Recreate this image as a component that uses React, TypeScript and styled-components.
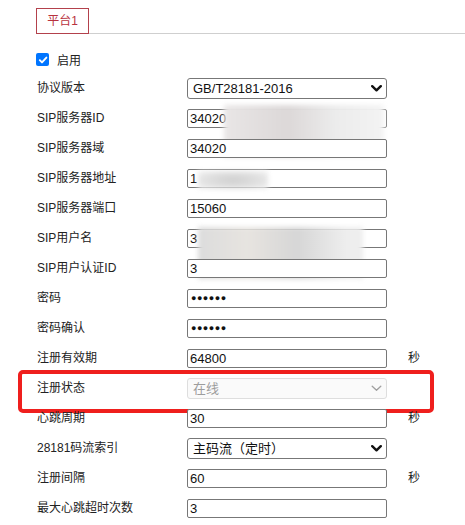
import React from "react";
import styled, { createGlobalStyle } from "styled-components";

const Global = createGlobalStyle`
  html, body { margin: 0; padding: 0; background: #fff; }
  body { font-family: "Liberation Sans", "Noto Sans CJK SC", sans-serif; color: #222; }
  * { box-sizing: border-box; }
`;

const Page = styled.div`
  position: relative;
  width: 465px;
  height: 525px;
  overflow: hidden;
  padding: 8px 0 0 36px;
`;

const TabBar = styled.div`
  display: flex;
  border-bottom: 1px solid #cfcfcf;
  height: 26px;
`;

const Tab = styled.div`
  width: 53px;
  height: 26px;
  border: 1px solid #b3414c;
  display: flex;
  align-items: center;
  justify-content: center;
  color: #b8323e;
  font-size: 12px;
  line-height: 1;
  background: #fff;
`;

const Form = styled.div`
  margin-top: 9px;
  display: flex;
  flex-direction: column;
`;

const CheckRow = styled.label`
  display: flex;
  align-items: center;
  height: 30px;
  padding-top: 3px;
  gap: 8px;
  font-size: 12px;
`;

const CheckBox = styled.span`
  width: 13px;
  height: 13px;
  border-radius: 2px;
  background: #0075ff;
  display: flex;
  align-items: center;
  justify-content: center;
`;

const Row = styled.div<{ $highlight?: boolean }>`
  position: relative;
  display: grid;
  grid-template-columns: 151px 200px 21px auto;
  align-items: center;
  height: 30px;
  font-size: 12px;
  &::after {
    content: "";
    display: ${(p) => (p.$highlight ? "block" : "none")};
    position: absolute;
    left: -18px;
    top: -3px;
    width: 408px;
    height: 35px;
    border: 4px solid #ef1f1d;
    border-radius: 5px;
    pointer-events: none;
  }
`;

const Label = styled.span`
  padding-left: 1px;
  white-space: nowrap;
  line-height: 16px;
`;

const FieldBox = styled.div<{ $select?: boolean; $disabled?: boolean }>`
  position: relative;
  height: ${(p) => (p.$select ? 21 : 19)}px;
  border: 1px solid ${(p) => (p.$disabled ? "#dedede" : "#777")};
  border-radius: ${(p) => (p.$select ? 3 : 2)}px;
  background: ${(p) => (p.$disabled ? "#fafafa" : "#fff")};
  color: ${(p) => (p.$disabled ? "#9d9d9d" : "#111")};
  font-size: 13px;
  line-height: 17px;
  padding-left: ${(p) => (p.$select ? 5 : 2)}px;
  display: flex;
  align-items: center;
  overflow: hidden;
  white-space: nowrap;
`;

const Dots = styled.span`
  font-size: 9px;
  letter-spacing: 0.5px;
  padding-left: 1px;
`;

const Chevron = styled.svg`
  position: absolute;
  right: 4px;
  top: 50%;
  margin-top: -3px;
`;

const Unit = styled.span`
  grid-column: 4;
  font-size: 12px;
  line-height: 16px;
`;

const Redact = styled.div<{ $tone: string }>`
  position: absolute;
  filter: blur(2.5px);
  background: ${(p) => p.$tone};
  pointer-events: none;
`;

const Mark = styled.div`
  position: absolute;
  font-family: "Liberation Sans", "Noto Sans CJK SC", sans-serif;
  font-weight: 700;
  font-size: 20px;
  letter-spacing: 2px;
  color: rgba(0, 0, 0, 0.025);
  transform: rotate(-18deg);
  white-space: nowrap;
  pointer-events: none;
`;

type Field = {
  label: string;
  value?: string;
  kind?: "select" | "disabled" | "password";
  unit?: boolean;
  highlight?: boolean;
  redact?: { left: number; width: number; top: number; height: number; tone: string };
};

const fields: Field[] = [
  { label: "协议版本", value: "GB/T28181-2016", kind: "select" },
  { label: "SIP服务器ID", value: "34020", redact: { left: 36, width: 160, top: -5, height: 52, tone: "linear-gradient(90deg,#e9e6e6,#dcd8d8 40%,#ececec 70%,#f3f3f3)" } },
  { label: "SIP服务器域", value: "34020" },
  { label: "SIP服务器地址", value: "1", redact: { left: 10, width: 70, top: 1, height: 18, tone: "radial-gradient(ellipse at center,#cfcfcf 0%,#e2e2e2 60%,#f4f4f4 100%)" } },
  { label: "SIP服务器端口", value: "15060" },
  { label: "SIP用户名", value: "3", redact: { left: 10, width: 165, top: -3, height: 52, tone: "linear-gradient(90deg,#dcdcdc,#e7e4e0 30%,#d6d6d6 60%,#eeeeee 90%)" } },
  { label: "SIP用户认证ID", value: "3" },
  { label: "密码", kind: "password" },
  { label: "密码确认", kind: "password" },
  { label: "注册有效期", value: "64800", unit: true },
  { label: "注册状态", value: "在线", kind: "disabled", highlight: true },
  { label: "心跳周期", value: "30", unit: true },
  { label: "28181码流索引", value: "主码流（定时）", kind: "select" },
  { label: "注册间隔", value: "60", unit: true },
  { label: "最大心跳超时次数", value: "3" },
];

function ChevronIcon({ disabled }: { disabled?: boolean }) {
  return (
    <Chevron width="11" height="7" viewBox="0 0 11 7">
      <polyline
        points="1.2,1.2 5.5,5.3 9.8,1.2"
        fill="none"
        stroke={disabled ? "#a0a0a0" : "#111"}
        strokeWidth={disabled ? 1.3 : 2.4}
        strokeLinecap="round"
        strokeLinejoin="round"
      />
    </Chevron>
  );
}

export default function App() {
  return (
    <>
      <Global />
      <Page>
        <TabBar>
          <Tab>平台1</Tab>
        </TabBar>
        <Form>
          <CheckRow>
            <CheckBox>
              <svg width="10" height="10" viewBox="0 0 10 10">
                <polyline points="1.8,5.2 4,7.4 8.4,2.6" fill="none" stroke="#fff" strokeWidth="1.9" strokeLinecap="round" strokeLinejoin="round" />
              </svg>
            </CheckBox>
            启用
          </CheckRow>
          {fields.map((f) => (
            <Row key={f.label} $highlight={f.highlight}>
              <Label>{f.label}</Label>
              <FieldBox $select={f.kind === "select" || f.kind === "disabled"} $disabled={f.kind === "disabled"} style={f.redact ? { overflow: "visible" } : undefined}>
                {f.kind === "password" ? <Dots>●●●●●●</Dots> : f.value}
                {(f.kind === "select" || f.kind === "disabled") && <ChevronIcon disabled={f.kind === "disabled"} />}
                {f.redact && (
                  <Redact
                    $tone={f.redact.tone}
                    style={{ left: f.redact.left, width: f.redact.width, top: f.redact.top, height: f.redact.height }}
                  />
                )}
              </FieldBox>
              {f.unit && <Unit>秒</Unit>}
            </Row>
          ))}
        </Form>
        <Mark style={{ left: 10, top: 45 }}>TSINGSEE 青犀视频</Mark>
        <Mark style={{ left: 225, top: 80 }}>TSINGSEE 青犀视频</Mark>
        <Mark style={{ left: 120, top: 255 }}>TSINGSEE 青犀视频</Mark>
        <Mark style={{ left: 140, top: 455 }}>TSINGSEE</Mark>
      </Page>
    </>
  );
}
